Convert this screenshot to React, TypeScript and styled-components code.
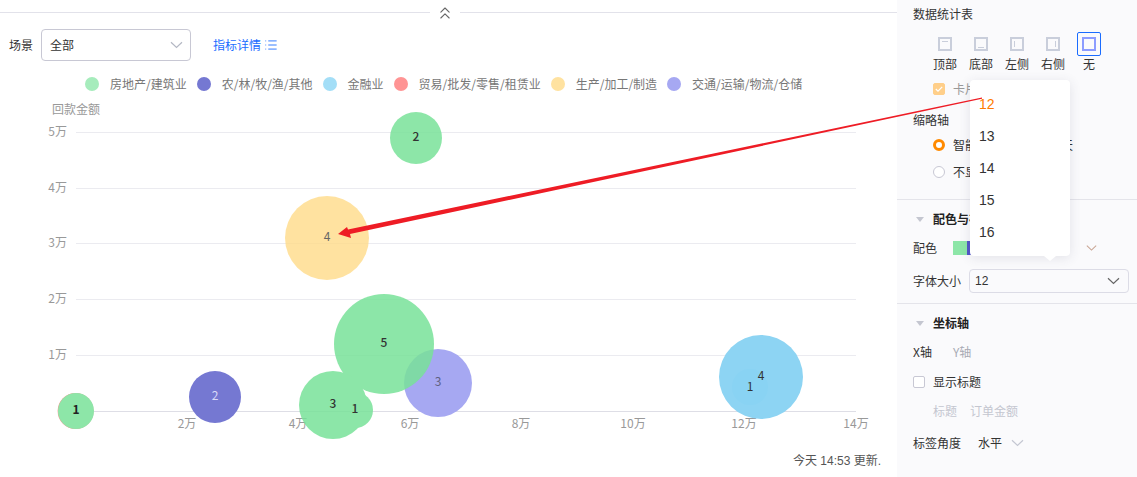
import { styled, createGlobalStyle } from "styled-components";
import { ChevronsUp, List } from "lucide-react";

const GREEN = "#79e299";
const INDIGO = "#7578d2";
const BLUE = "#8dd4f3";
const RED = "#ff9494";
const YELLOW = "#ffe2a0";
const PURPLE = "#a6a8f2";

const LEGEND = [
  { name: "房地产/建筑业", color: "#a6ecbc" },
  { name: "农/林/牧/渔/其他", color: INDIGO },
  { name: "金融业", color: "#a3def7" },
  { name: "贸易/批发/零售/租赁业", color: RED },
  { name: "生产/加工/制造", color: YELLOW },
  { name: "交通/运输/物流/仓储", color: PURPLE },
];

const Y_TICKS = [
  { label: "5万", y: 132 },
  { label: "4万", y: 188 },
  { label: "3万", y: 243 },
  { label: "2万", y: 299 },
  { label: "1万", y: 355 },
];

const X_TICKS = [
  { label: "2万", x: 187 },
  { label: "4万", x: 298 },
  { label: "6万", x: 410 },
  { label: "8万", x: 521 },
  { label: "10万", x: 633 },
  { label: "12万", x: 744 },
  { label: "14万", x: 856 },
];

const GREEN_BUBBLES = [
  { x: 416, y: 138, r: 26, n: 2 },
  { x: 384, y: 344, r: 50, n: 5 },
  { x: 333, y: 405, r: 34, n: 3 },
  { x: 355, y: 410, r: 18, n: 1 },
];

const POSITIONS = ["顶部", "底部", "左侧", "右侧", "无"];
const FONT_SIZES = [12, 13, 14, 15, 16];
const PALETTE = ["#8de6a8", "#5356c7", "#8dd4f3", "#ff9494", "#ffe2a0", "#a6a8f2"];

const PositionIcon = ({ index, active }: { index: number; active: boolean }) => {
  const inner = ["M4 4.5h6", "M4 10.5h6", "M4.5 4v6", "M9.5 4v6"][index];
  return (
    <svg width="14" height="14" viewBox="0 0 14 14" fill="none">
      <rect x="1" y="1" width="12" height="12" stroke={active ? "#8c9cff" : "#c9cedb"} strokeWidth="2" />
      {inner && <path d={inner} stroke="#c9cedb" strokeWidth="1" />}
    </svg>
  );
};

const Caret = ({ color = "#b4b8c4", width = 13 }: { color?: string; width?: number }) => (
  <svg width={width} height="8" viewBox="0 0 13 8" fill="none">
    <path d="M1 1.2 6.5 6.4 12 1.2" stroke={color} strokeWidth="1.2" />
  </svg>
);

const App = () => {
  return (
    <Page>
      <GlobalStyle />
      <Main>
        <CollapseBar>
          <Line $width="430px" />
          <CollapseIcon>
            <ChevronsUp size={20} strokeWidth={1.3} color="#666" />
          </CollapseIcon>
          <Line />
        </CollapseBar>

        <FilterRow>
          <span>场景</span>
          <SceneSelect>
            全部
            <Caret />
          </SceneSelect>
          <DetailLink>
            指标详情
            <List size={14} strokeWidth={1.5} />
          </DetailLink>
        </FilterRow>

        <Legend>
          {LEGEND.map((item) => (
            <LegendItem key={item.name}>
              <LegendDot $color={item.color} />
              {item.name}
            </LegendItem>
          ))}
        </Legend>

        <Chart viewBox="0 100 897 345" width="897" height="345">
          <AxisText x="52" y="114">回款金额</AxisText>
          {Y_TICKS.map((tick) => (
            <g key={tick.label}>
              <line x1="76" x2="856" y1={tick.y + 0.5} y2={tick.y + 0.5} stroke="#ebebf0" />
              <AxisText x="67" y={tick.y + 4} textAnchor="end">{tick.label}</AxisText>
            </g>
          ))}
          <line x1="76" x2="856" y1="411.5" y2="411.5" stroke="#dedee6" />
          {X_TICKS.map((tick) => (
            <AxisText key={tick.label} x={tick.x} y="428" textAnchor="middle">{tick.label}</AxisText>
          ))}

          <circle cx="75.6" cy="411" r="18" fill={RED} />
          <circle cx="76" cy="411" r="18" fill="#8de6a8" />
          <circle cx="215" cy="397" r="26" fill={INDIGO} />
          <circle cx="327" cy="238" r="42" fill="#ffdb88" fillOpacity="0.8" />
          <circle cx="438" cy="383" r="34" fill={PURPLE} />
          <circle cx="761" cy="377" r="42" fill={BLUE} />
          <circle cx="750" cy="387" r="18" fill="#89d3f3" />
          <g opacity="0.85">
            {GREEN_BUBBLES.map((b) => (
              <circle key={`${b.x}-${b.y}`} cx={b.x} cy={b.y} r={b.r} fill={GREEN} />
            ))}
          </g>

          {GREEN_BUBBLES.map((b) => (
            <BubbleLabel key={`${b.x}-${b.y}`} x={b.x} y={b.y + 3} $color="#333" $weight={500}>{b.n}</BubbleLabel>
          ))}
          <BubbleLabel x="76" y="414" $color="#222" $weight={700}>1</BubbleLabel>
          <BubbleLabel x="215" y="400" $color="#d9daf8">2</BubbleLabel>
          <BubbleLabel x="327" y="241" $color="#666">4</BubbleLabel>
          <BubbleLabel x="438" y="386" $color="#5f6080">3</BubbleLabel>
          <BubbleLabel x="761" y="380" $color="#333">4</BubbleLabel>
          <BubbleLabel x="750" y="391" $color="#333">1</BubbleLabel>
        </Chart>

        <UpdateTime>今天 14:53 更新.</UpdateTime>
      </Main>

      <Panel>
        <Section $height={200}>
          <SectionTitle>数据统计表</SectionTitle>
          <PositionRow>
            {POSITIONS.map((name, index) => (
              <PositionOption key={name}>
                <PositionBox $active={index === 4}>
                  <PositionIcon index={index} active={index === 4} />
                </PositionBox>
                {name}
              </PositionOption>
            ))}
          </PositionRow>
          <IndentRow $top={7} $muted>
            <CheckBox $checked>
              <svg width="12" height="12" viewBox="0 0 12 12" fill="none">
                <path d="M2.8 6 5 8.2 9.2 3.8" stroke="#fff" strokeWidth="1.2" />
              </svg>
            </CheckBox>
            卡片样式
          </IndentRow>
          <Row $top={11}>缩略轴</Row>
          <IndentRow $top={5}>
            <Radio $checked />
            智能缩略日期展示到天
          </IndentRow>
          <IndentRow $top={7}>
            <Radio />
            不显示
          </IndentRow>
        </Section>

        <Section $height={104}>
          <SectionHeader>
            <Triangle />
            配色与布局
          </SectionHeader>
          <Row $top={9}>
            <FieldLabel $width="40px">配色</FieldLabel>
            <Palette>
              {PALETTE.map((color) => (
                <Swatch key={color} $color={color} />
              ))}
            </Palette>
            <PaletteCaret>
              <Caret color="#c9a593" width={11} />
            </PaletteCaret>
          </Row>
          <Row $top={13}>
            <FieldLabel $width="56px">字体大小</FieldLabel>
            <FontSelect>
              12
              <Caret color="#666" />
            </FontSelect>
          </Row>
        </Section>

        <Section $height={173}>
          <SectionHeader>
            <Triangle />
            坐标轴
          </SectionHeader>
          <Row $top={9}>
            <FieldLabel $width="40px">X轴</FieldLabel>
            <MutedText>Y轴</MutedText>
          </Row>
          <Row $top={10}>
            <CheckBox />
            显示标题
          </Row>
          <IndentRow $top={9} $faint>
            <FieldLabel $width="37px">标题</FieldLabel>
            订单金额
          </IndentRow>
          <Row $top={12}>
            <FieldLabel $width="65px">标签角度</FieldLabel>
            水平
            <AngleCaret>
              <Caret color="#c4c7d2" />
            </AngleCaret>
          </Row>
        </Section>

        <Dropdown>
          {FONT_SIZES.map((size) => (
            <DropdownItem key={size} $active={size === 12}>{size}</DropdownItem>
          ))}
        </Dropdown>
      </Panel>

      <ArrowOverlay viewBox="0 0 1137 477" width="1137" height="477">
        <polygon
          points="338,234 347,227 348,229.6 982,97.6 982,98.8 350,234 351,238"
          fill="#ee1c25"
        />
      </ArrowOverlay>
    </Page>
  );
};

export default App;

const GlobalStyle = createGlobalStyle`
  html, body {
    margin: 0;
    padding: 0;
    background: #fff;
  }
`;

const Page = styled.div`
  position: relative;
  display: flex;
  width: 1137px;
  height: 477px;
  overflow: hidden;

  font-family: "Noto Sans CJK SC", sans-serif;
  font-size: 12px;
  line-height: 16px;
  color: #333;
`;

const Main = styled.main`
  display: flex;
  flex-direction: column;
  width: 897px;
  flex-shrink: 0;
`;

const CollapseBar = styled.div`
  display: flex;
  align-items: center;
  height: 25px;
`;

const Line = styled.div<{ $width?: string }>`
  height: 1px;
  background: #e2e2ea;
  width: ${({ $width }) => $width ?? "auto"};
  flex: ${({ $width }) => ($width ? "none" : 1)};
`;

const CollapseIcon = styled.div`
  display: flex;
  justify-content: center;
  width: 30px;
`;

const FilterRow = styled.div`
  display: flex;
  align-items: center;
  gap: 8px;
  height: 32px;
  margin-top: 4px;
  padding-left: 9px;
`;

const SceneSelect = styled.div`
  display: flex;
  align-items: center;
  justify-content: space-between;
  box-sizing: border-box;
  width: 150px;
  height: 32px;
  padding: 0 7px 0 8px;

  border: 1px solid #c8c8d4;
  border-radius: 4px;
`;

const DetailLink = styled.a`
  display: flex;
  align-items: center;
  gap: 3px;
  margin-left: 14px;
  color: #1a6cff;
`;

const Legend = styled.div`
  display: flex;
  gap: 10px;
  height: 20px;
  margin-top: 13px;
  padding-left: 85px;
`;

const LegendItem = styled.div`
  display: flex;
  align-items: center;
  gap: 11px;
  color: #777;
  white-space: nowrap;
`;

const LegendDot = styled.span<{ $color: string }>`
  width: 14px;
  height: 14px;
  border-radius: 50%;
  background: ${({ $color }) => $color};
`;

const Chart = styled.svg`
  display: block;
  margin-top: 6px;
  font-family: "Noto Sans CJK SC", "Noto Sans", sans-serif;
`;

const AxisText = styled.text`
  font-size: 12px;
  fill: #999;
`;

const BubbleLabel = styled.text<{ $color: string; $weight?: number }>`
  font-size: 12px;
  text-anchor: middle;
  font-weight: ${({ $weight }) => $weight ?? 400};
  fill: ${({ $color }) => $color};
`;

const UpdateTime = styled.div`
  display: flex;
  align-items: center;
  justify-content: flex-end;
  height: 32px;
  padding-right: 16px;
  font-family: "Liberation Sans", "Noto Sans CJK SC", sans-serif;
  line-height: 15px;
  color: #555;
`;

const Panel = styled.aside`
  position: relative;
  flex: 1;
  background: #fafafc;
`;

const Section = styled.section<{ $height: number }>`
  display: flow-root;
  box-sizing: border-box;
  height: ${({ $height }) => $height}px;
  padding: 0 8px 0 16px;
  border-bottom: 1px solid #e4e4ea;

  &:last-of-type {
    border-bottom: none;
  }
`;

const SectionTitle = styled.div`
  display: flex;
  align-items: center;
  height: 28px;
`;

const PositionRow = styled.div`
  display: flex;
  margin-top: 4px;
  padding-left: 14px;
`;

const PositionOption = styled.div`
  display: flex;
  flex-direction: column;
  align-items: center;
  width: 36px;
`;

const PositionBox = styled.div<{ $active: boolean }>`
  display: flex;
  align-items: center;
  justify-content: center;
  box-sizing: border-box;
  width: 24px;
  height: 24px;
  border: 1px solid ${({ $active }) => ($active ? "#1a6cff" : "transparent")};
  border-radius: 2px;
`;

const Row = styled.div<{ $top: number }>`
  display: flex;
  align-items: center;
  height: 20px;
  margin-top: ${({ $top }) => $top}px;
`;

const IndentRow = styled(Row)<{ $muted?: boolean; $faint?: boolean }>`
  padding-left: 20px;
  white-space: nowrap;
  color: ${({ $muted, $faint }) => ($faint ? "#c4c6d0" : $muted ? "#999" : "#333")};
`;

const CheckBox = styled.span<{ $checked?: boolean }>`
  display: flex;
  box-sizing: border-box;
  width: 12px;
  height: 12px;
  margin-right: 8px;
  border-radius: 2px;
  border: 1px solid ${({ $checked }) => ($checked ? "#ffcf8a" : "#c8c8d4")};
  background: ${({ $checked }) => ($checked ? "#ffcf8a" : "#fff")};

  svg {
    margin: -1px;
  }
`;

const Radio = styled.span<{ $checked?: boolean }>`
  box-sizing: border-box;
  width: 12px;
  height: 12px;
  margin-right: 8px;
  border-radius: 50%;
  background: #fff;
  border: ${({ $checked }) => ($checked ? "3px solid #ff8a00" : "1px solid #c8c8d4")};
`;

const SectionHeader = styled.div`
  display: flex;
  align-items: center;
  height: 20px;
  margin-top: 9px;
  font-weight: 700;
  color: #222;
`;

const Triangle = styled.span`
  width: 0;
  height: 0;
  margin: 1px 9px 0 3px;
  border-left: 4px solid transparent;
  border-right: 4px solid transparent;
  border-top: 5px solid #c4c6d0;
`;

const FieldLabel = styled.span<{ $width: string }>`
  flex-shrink: 0;
  width: ${({ $width }) => $width};
`;

const MutedText = styled.span`
  color: #a8aab4;
`;

const Palette = styled.div`
  display: flex;
`;

const Swatch = styled.span<{ $color: string }>`
  width: 14px;
  height: 14px;
  background: ${({ $color }) => $color};
`;

const PaletteCaret = styled.span`
  display: flex;
  margin-left: 49px;
`;

const FontSelect = styled.div`
  display: flex;
  align-items: center;
  justify-content: space-between;
  box-sizing: border-box;
  width: 160px;
  height: 24px;
  padding: 0 8px 0 5px;
  font-family: "Liberation Sans", sans-serif;
  border: 1px solid #dcdce6;
  border-radius: 4px;
`;

const AngleCaret = styled.span`
  display: flex;
  margin-left: 9px;
`;

const Dropdown = styled.ul`
  position: absolute;
  top: 80px;
  left: 73px;
  box-sizing: border-box;
  width: 100px;
  height: 176px;
  margin: 0;
  padding: 8px 0;
  list-style: none;

  font-family: "Liberation Sans", sans-serif;
  background: #fff;
  border-radius: 4px;
  box-shadow: 0 2px 12px rgba(60, 60, 90, 0.12);

  &::after {
    content: "";
    position: absolute;
    left: 74px;
    bottom: -5px;
    border-left: 6px solid transparent;
    border-right: 6px solid transparent;
    border-top: 5px solid #fff;
  }
`;

const DropdownItem = styled.li<{ $active: boolean }>`
  display: flex;
  align-items: center;
  height: 32px;
  padding-left: 9px;
  font-size: 14px;
  color: ${({ $active }) => ($active ? "#ff7a00" : "#333")};
`;

const ArrowOverlay = styled.svg`
  position: absolute;
  top: 0;
  left: 0;
  pointer-events: none;
`;
